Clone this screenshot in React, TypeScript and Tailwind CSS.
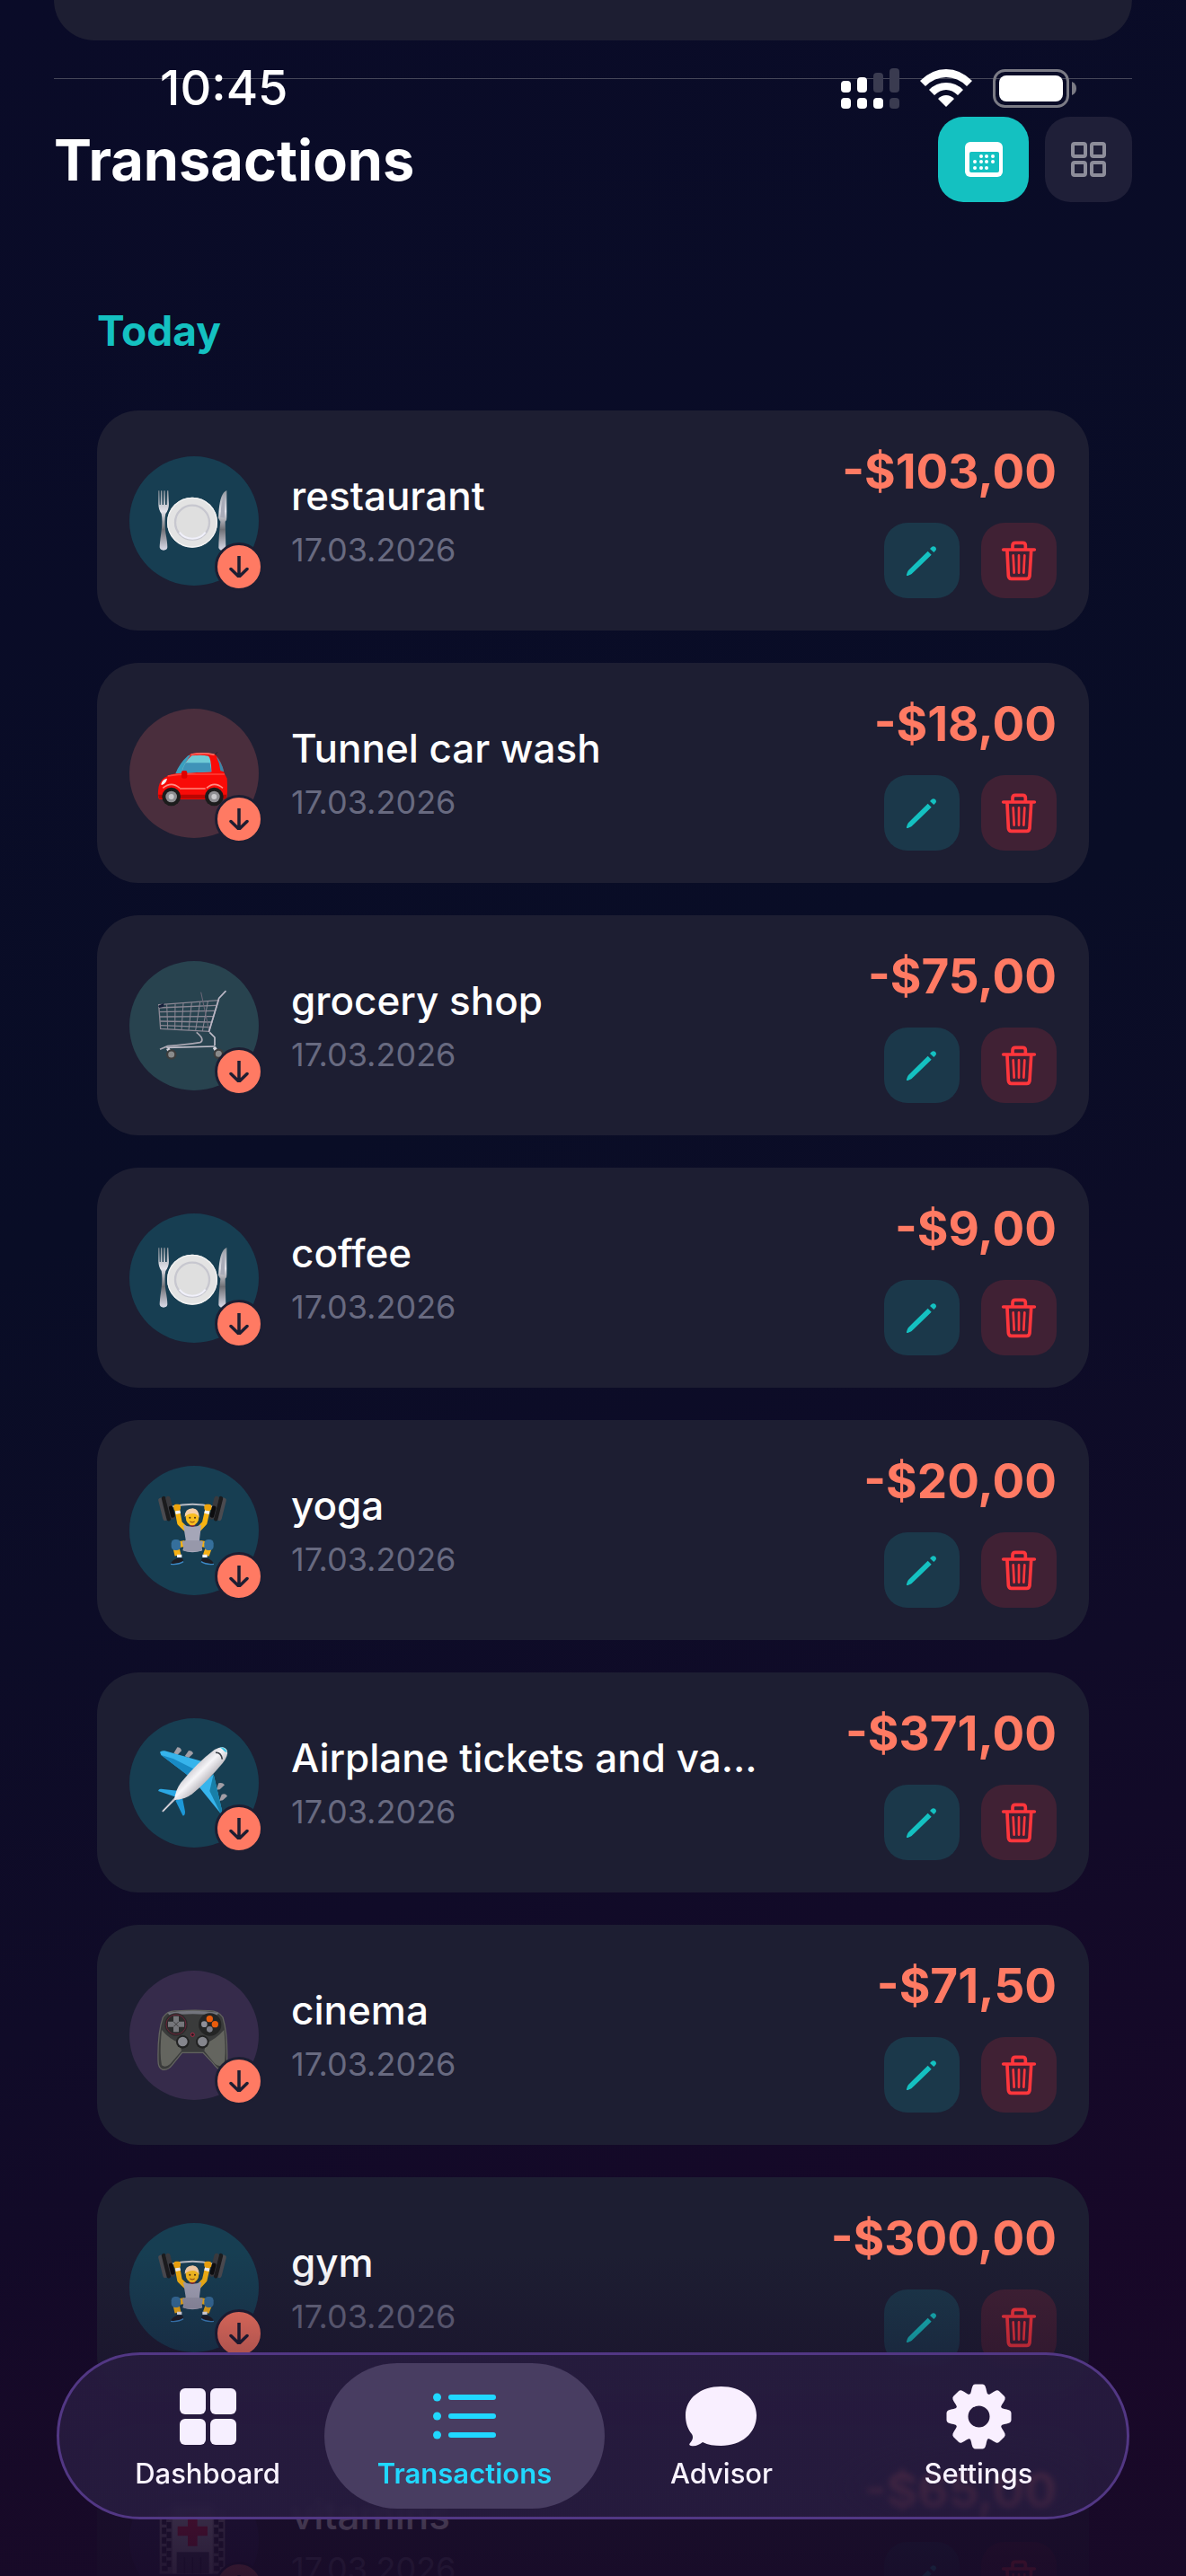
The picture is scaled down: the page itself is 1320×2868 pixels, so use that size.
import React from "react";

type Category = "food" | "car" | "shopping" | "sport" | "travel" | "fun" | "health";

type Transaction = {
  title: string;
  date: string;
  amount: string;
  category: Category;
};

const transactions: Transaction[] = [
  { title: "restaurant", date: "17.03.2026", amount: "-$103,00", category: "food" },
  { title: "Tunnel car wash", date: "17.03.2026", amount: "-$18,00", category: "car" },
  { title: "grocery shop", date: "17.03.2026", amount: "-$75,00", category: "shopping" },
  { title: "coffee", date: "17.03.2026", amount: "-$9,00", category: "food" },
  { title: "yoga", date: "17.03.2026", amount: "-$20,00", category: "sport" },
  { title: "Airplane tickets and va...", date: "17.03.2026", amount: "-$371,00", category: "travel" },
  { title: "cinema", date: "17.03.2026", amount: "-$71,50", category: "fun" },
  { title: "gym", date: "17.03.2026", amount: "-$300,00", category: "sport" },
  { title: "vitamins", date: "17.03.2026", amount: "-$65,00", category: "health" },
];

const circleColor: Record<Category, string> = {
  food: "bg-[#173e52]",
  car: "bg-[#4a2e3d]",
  shopping: "bg-[#28434f]",
  sport: "bg-[#173e52]",
  travel: "bg-[#173e52]",
  fun: "bg-[#362b4b]",
  health: "bg-[#28264f]",
};

function Plate() {
  return (
    <svg viewBox="171 183 234 234" className="size-[78px] overflow-visible" aria-hidden="true">
      <defs>
        <linearGradient id="steel" x1="0" y1="0" x2="0" y2="1">
          <stop offset="0" stopColor="#8f959d" />
          <stop offset="0.35" stopColor="#e4e4ec" />
          <stop offset="0.65" stopColor="#6f7076" />
          <stop offset="1" stopColor="#dcdcea" />
        </linearGradient>
      </defs>
      <path d="M169 199 V244 Q169 262 179 276 Q184 300 178 340 Q173 376 173 388 Q175 398 186 398 Q198 398 199 388 Q199 372 193 340 Q188 300 193 276 Q204 262 204 244 L202 199 L198 199 L197 246 H192 L191 199 H187 L186 246 H182 L181 199 H177 L176 246 H173 L172 199 Z" fill="url(#steel)" />
      <path d="M397 198 Q376 206 371 262 L369 290 Q374 300 376 302 Q370 352 370 390 Q374 399 384 399 Q394 398 394 388 L392 302 Q398 298 397 288 Z" fill="url(#steel)" />
      <path d="M390 210 Q378 230 376 288 L390 290 Z" fill="#a8abb8" />
      <circle cx="282" cy="305" r="84" fill="#e3e3e3" />
      <circle cx="282" cy="305" r="82" fill="none" stroke="#f1f1f1" strokeWidth="4" />
      <circle cx="282" cy="305" r="57" fill="#dfdfdf" stroke="#c7c7cf" strokeWidth="7" />
      <path d="M239 338 A55 55 0 0 0 326 338" fill="none" stroke="#f0f0fa" strokeWidth="6" />
    </svg>
  );
}

function Car() {
  return (
    <svg viewBox="171 186 234 234" className="size-[78px] overflow-visible" aria-hidden="true">
      <path d="M357 242 L366 232" stroke="#222" strokeWidth="3" />
      <path d="M236 302 Q252 258 276 238 Q320 231 358 240 Q378 258 389 302 L398 320 Q401 370 396 388 L326 390 H172 Q166 384 168 362 Q170 330 188 318 Q208 306 236 302 Z" fill="#f90b08" />
      <path d="M226 304 Q240 268 268 244 L278 241 Q258 264 246 302 Z" fill="#3aa0c0" />
      <path d="M246 302 Q252 268 280 244 Q312 240 336 245 Q345 252 346 298 Z" fill="#6fcbd6" />
      <path d="M248 296 Q252 282 260 268 H341 L346 298 L247 302 Z" fill="#3f93b8" />
      <path d="M362 246 Q380 264 388 298 L376 294 Q374 270 362 246 Z" fill="#3b87a8" />
      <path d="M278 240 Q320 233 356 241" stroke="#ff6a60" strokeWidth="5" fill="none" />
      <path d="M200 312 Q240 304 300 306 L390 306" stroke="#ff4338" strokeWidth="5" fill="none" />
      <rect x="246" y="294" width="19" height="26" rx="6" fill="#df0000" />
      <path d="M178 340 Q182 322 198 320 Q196 336 180 342 Z" fill="#f3f3f3" />
      <path d="M240 354 H326" stroke="#ff9a8c" strokeWidth="4" />
      <path d="M168 374 H396 V388 H172 Z" fill="#ba0602" />
      <path d="M184 352 Q212 328 240 352 M330 352 Q356 328 384 352" stroke="#ff8d84" strokeWidth="5" fill="none" />
      <circle cx="212" cy="381" r="31" fill="#1c1c1c" />
      <circle cx="212" cy="381" r="19" fill="#8e8e92" />
      <circle cx="212" cy="381" r="9" fill="#c9c9cc" />
      <circle cx="355" cy="381" r="31" fill="#1c1c1c" />
      <circle cx="355" cy="381" r="19" fill="#8e8e92" />
      <circle cx="355" cy="381" r="9" fill="#c9c9cc" />
    </svg>
  );
}

function Cart() {
  return (
    <svg viewBox="171 189 234 234" className="size-[78px] overflow-visible" fill="none" aria-hidden="true">
      <g stroke="#8b8794" strokeWidth="4">
        <path d="M170 236 L370 221 L338 325 L176 316 Z" />
        <path d="M171 246 L362 238 M172 260 L358 256 M174 276 L354 275 M175 291 L349 294 M176 305 L343 311" />
        <path d="M197 235 L200 317 M225 233 L224 318 M252 231 L246 320 M280 229 L270 321 M308 227 L293 322 M334 225 L316 324" strokeWidth="3" />
        <path d="M311 194 L338 322" strokeWidth="3" stroke="#6d6878" />
      </g>
      <path d="M338 325 L371 214 L393 191" stroke="#bcb8c6" strokeWidth="5" strokeLinecap="round" />
      <path d="M168 240 L187 230 V242 L172 246 Z" fill="#16203a" />
      <path d="M296 328 Q326 352 308 362 Q260 370 200 374 L174 385" stroke="#aaa7b2" strokeWidth="5" />
      <path d="M340 328 L357 345 V372 M196 379 L358 375" stroke="#c2bfca" strokeWidth="5" />
      <path d="M200 382 L212 402 M355 378 L368 398" stroke="#d9d7df" strokeWidth="11" />
      <circle cx="212" cy="402" r="14" fill="#8b8b8b" stroke="#3d3d3d" strokeWidth="7" />
      <circle cx="370" cy="400" r="14" fill="#8b8b8b" stroke="#3d3d3d" strokeWidth="7" />
    </svg>
  );
}

function Lifter() {
  return (
    <svg viewBox="171 192 234 234" className="size-[78px] overflow-visible" aria-hidden="true">
      <path d="M212 230 Q284 212 352 230" stroke="#b9bcc4" strokeWidth="6" fill="none" />
      <g transform="rotate(-14 197 236)">
        <rect x="176" y="196" width="18" height="78" rx="8" fill="#4b4b50" />
        <rect x="188" y="193" width="14" height="85" rx="7" fill="#1b1b1d" />
        <rect x="201" y="196" width="16" height="80" rx="8" fill="#3a3a3e" />
        <rect x="204" y="230" width="14" height="40" rx="6" fill="#0d0d0f" />
      </g>
      <g transform="rotate(14 367 236)">
        <rect x="370" y="196" width="18" height="78" rx="8" fill="#4b4b50" />
        <rect x="362" y="193" width="14" height="85" rx="7" fill="#1b1b1d" />
        <rect x="347" y="196" width="16" height="80" rx="8" fill="#3a3a3e" />
        <rect x="347" y="230" width="14" height="40" rx="6" fill="#0d0d0f" />
      </g>
      <path d="M231 236 L240 284 L262 306 M334 236 L323 284 L302 306" stroke="#f7b412" strokeWidth="17" fill="none" strokeLinejoin="round" strokeLinecap="round" />
      <path d="M226 250 L242 246 M323 246 L339 250" stroke="#f3f3f7" strokeWidth="11" />
      <rect x="220" y="221" width="23" height="21" rx="8" fill="#eea40c" />
      <rect x="322" y="221" width="24" height="21" rx="8" fill="#eea40c" />
      <path d="M252 290 Q282 302 312 290 L306 340 L316 376 Q282 388 250 376 L260 340 Z" fill="#a5a6b8" />
      <path d="M270 288 Q282 306 295 288 Z" fill="#8c2436" />
      <ellipse cx="282" cy="264" rx="22" ry="28" fill="#f9bd1f" />
      <path d="M257 264 Q256 236 284 235 Q306 238 305 266 Q298 252 284 252 Q266 252 257 264 Z" fill="#f5cfaa" />
      <circle cx="274" cy="266" r="3" fill="#4a2e12" />
      <circle cx="291" cy="266" r="3" fill="#4a2e12" />
      <path d="M274 279 Q282 285 290 279" stroke="#8c4310" strokeWidth="3" fill="none" />
      <path d="M258 352 L226 358 L234 392 M308 352 L340 358 L328 392" stroke="#f5b015" strokeWidth="21" fill="none" strokeLinejoin="round" />
      <path d="M262 342 L248 346 L256 378 H312 L318 346 L302 342 Z" fill="#9798aa" />
      <rect x="212" y="339" width="31" height="36" rx="13" fill="#356f9c" />
      <rect x="322" y="339" width="31" height="36" rx="13" fill="#356f9c" />
      <path d="M231 394 H247 M316 394 H332" stroke="#f2f2f7" strokeWidth="10" />
      <path d="M210 420 Q212 410 232 401 L250 402 L252 412 Q240 421 210 420 Z M354 420 Q352 410 332 401 L314 402 L312 412 Q324 421 354 420 Z" fill="#1c1d24" />
      <path d="M210 421 Q236 424 252 413 M354 421 Q328 424 312 413" stroke="#3d8ac8" strokeWidth="4" fill="none" />
    </svg>
  );
}

function Plane() {
  return (
    <svg viewBox="171 168 234 234" className="size-[78px] overflow-visible" aria-hidden="true">
      <defs>
        <linearGradient id="hull" x1="0" y1="0" x2="1" y2="1">
          <stop offset="0.25" stopColor="#a9a5ad" />
          <stop offset="0.48" stopColor="#f6f5f8" />
          <stop offset="0.75" stopColor="#8e8a92" />
        </linearGradient>
      </defs>
      <g fill="#a29ea6">
        <path d="M220 186 L232 166 Q244 166 246 178 L232 192 Z" />
        <path d="M257 196 L270 177 Q282 177 285 187 L270 201 Z" />
        <path d="M362 308 L370 286 Q383 282 390 292 L374 307 Z" />
        <path d="M372 345 L380 324 Q392 318 399 329 L384 343 Z" />
      </g>
      <path d="M174 182 Q178 176 190 178 L312 212 L270 262 L178 192 Z" fill="#36b4ec" />
      <path d="M178 192 L218 204 L290 240 L270 262 Z" fill="#188ac4" />
      <path d="M353 256 L380 372 Q382 386 376 386 L304 298 Z" fill="#36b4ec" />
      <path d="M353 256 L380 372 Q382 386 376 386 L340 312 Z" fill="#187fa8" />
      <path d="M168 312 Q170 304 178 305 L240 312 L232 334 Z" fill="#2ba7e4" />
      <path d="M226 344 L248 330 L258 380 Q258 396 250 394 Z" fill="#1d98d8" />
      <path d="M184 379 L238 322" stroke="#c0bcc6" strokeWidth="6" strokeLinecap="round" />
      <path d="M222 342 Q226 308 244 284 Q300 216 356 174 Q388 156 398 176 Q404 192 384 218 Q336 276 282 322 Q256 342 222 342 Z" fill="url(#hull)" />
      <path d="M373 166 Q394 164 398 184 Q388 180 380 170 Z" fill="#3fc4e4" />
      <path d="M360 184 Q378 182 382 206" fill="none" stroke="#3b4048" strokeWidth="5" />
      <path d="M186 378 L246 320" stroke="#e8e6ec" strokeWidth="3" />
    </svg>
  );
}

function Gamepad() {
  return (
    <svg viewBox="171 171 234 234" className="size-[78px] overflow-visible" aria-hidden="true">
      <path d="M184 228 Q200 204 232 207 Q283 203 334 206 Q368 204 384 228 Q400 280 398 372 Q396 404 376 402 Q366 402 350 380 L318 346 H248 L214 388 Q200 406 182 402 Q168 398 168 372 Q166 280 184 228 Z" fill="#3a3b3b" stroke="#62635f" strokeWidth="4" />
      <path d="M180 270 Q204 300 240 314 L246 340 L208 384 Q192 398 180 388 Q172 350 180 270 Z M388 270 Q362 300 328 314 L322 340 L358 384 Q374 396 388 384 Q396 350 388 270 Z" fill="#64655f" />
      <path d="M200 212 Q283 200 370 212 L364 222 Q283 212 206 222 Z" fill="#73757d" />
      <circle cx="228" cy="252" r="38" fill="#2a2b2b" />
      <circle cx="228" cy="252" r="33" fill="none" stroke="#6c2338" strokeWidth="3" />
      <path d="M219 224 H237 V242 H255 V260 H237 V277 H219 V260 H201 V242 H219 Z" fill="#76777b" />
      <path d="M220 243 L236 259 M236 243 L220 259" stroke="#404040" strokeWidth="3" />
      <circle cx="341" cy="252" r="38" fill="#242525" />
      <circle cx="340" cy="233" r="11" fill="#e95c0c" />
      <circle cx="358" cy="251" r="11" fill="#e95c0c" />
      <circle cx="322" cy="251" r="10" fill="#8f909a" />
      <circle cx="340" cy="268" r="10" fill="#7d7e88" />
      <circle cx="283" cy="286" r="6" fill="#2b1a20" stroke="#b02a48" strokeWidth="3" />
      <circle cx="250" cy="310" r="22" fill="#222323" />
      <circle cx="250" cy="309" r="16" fill="#85868d" />
      <circle cx="316" cy="310" r="22" fill="#222323" />
      <circle cx="316" cy="309" r="16" fill="#85868d" />
    </svg>
  );
}

function Hospital() {
  return (
    <svg viewBox="171 183 234 234" className="size-[78px] overflow-visible" aria-hidden="true">
      <rect x="173" y="205" width="218" height="208" fill="#8c8793" />
      <rect x="216" y="186" width="134" height="226" fill="#b9b4bf" />
      <path d="M267 220 H299 V254 H333 V286 H299 V320 H267 V286 H233 V254 H267 Z" fill="#e0213f" />
      <path d="M188 224 H204 V396 H188 Z M362 224 H378 V396 H362 Z" fill="none" stroke="#262338" strokeWidth="15" strokeDasharray="22 10" />
      <rect x="230" y="340" width="108" height="72" fill="#464860" />
      <path d="M256 358 V412 M283 358 V412 M310 358 V412" stroke="#252840" strokeWidth="5" />
    </svg>
  );
}

const emoji: Record<Category, () => React.JSX.Element> = {
  food: Plate,
  car: Car,
  shopping: Cart,
  sport: Lifter,
  travel: Plane,
  fun: Gamepad,
  health: Hospital,
};

function ArrowDown() {
  return (
    <svg viewBox="389 408 96 96" className="size-6" fill="none" stroke="#1d1e32" strokeWidth="14" strokeLinecap="round" strokeLinejoin="round" aria-hidden="true">
      <path d="M437 409 V501 M401 466 L437 501 L473 466" />
    </svg>
  );
}

function Pencil() {
  return (
    <svg viewBox="426 480 144 144" className="size-12" fill="#14c1c1" aria-hidden="true">
      <path d="M518 521 L530 533 L464 597 Q462 599 451 603 Q446 604 447 599 Q450 589 453 585 Z" />
      <path d="M530 508 Q536 502 543 507 Q549 514 543 520 L538 525 L525 513 Z" />
    </svg>
  );
}

function Trash() {
  return (
    <svg viewBox="750 480 144 144" className="size-12" fill="none" stroke="#ff363c" strokeLinecap="round" strokeLinejoin="round" aria-hidden="true">
      <path d="M770 516 H874" strokeWidth="11" />
      <path d="M801 514 V502 Q801 493 810 493 H835 Q844 493 844 502 V514" strokeWidth="11" />
      <path d="M783 520 L787 603 Q788 613 797 613 H848 Q857 613 858 603 L863 520" strokeWidth="11" />
      <path d="M803 535 L806 593 M822 535 V593 M841 535 L838 593" strokeWidth="8" />
    </svg>
  );
}

function TransactionCard({ title, date, amount, category }: Transaction) {
  const Emoji = emoji[category];
  return (
    <li className="flex h-[245px] shrink-0 items-center gap-9 rounded-[46px] bg-[#1d1e32] px-9">
      <div className={`relative flex size-36 shrink-0 items-center justify-center rounded-full ${circleColor[category]}`}>
        <Emoji />
        <span className="absolute -right-[5px] -bottom-[6px] flex size-[54px] items-center justify-center rounded-full border-[3px] border-[#1d1e32] bg-[#ff7a63]">
          <ArrowDown />
        </span>
      </div>
      <div className="min-w-0 flex-1 pt-1">
        <h3 className="text-[44px] leading-[60px] font-medium whitespace-nowrap text-white">{title}</h3>
        <p className="text-[36px] leading-[60px] whitespace-nowrap text-[#686a80]">{date}</p>
      </div>
      <div className="flex shrink-0 flex-col items-end gap-6">
        <p className="text-[53px] leading-[65px] font-bold text-[#ff7a63]">{amount}</p>
        <div className="flex gap-6">
          <button type="button" aria-label={`Edit ${title}`} className="flex size-[84px] items-center justify-center rounded-[26px] bg-[#1b384a]">
            <Pencil />
          </button>
          <button type="button" aria-label={`Delete ${title}`} className="flex size-[84px] items-center justify-center rounded-[26px] bg-[#402134]">
            <Trash />
          </button>
        </div>
      </div>
    </li>
  );
}

function StatusBar() {
  return (
    <div className="absolute inset-x-0 top-0 z-10 flex h-[196px] items-center justify-between pr-[121px] pl-[178px]">
      <span className="text-[54px] leading-[64px] font-medium text-white">10:45</span>
      <div className="flex items-center gap-[23px]">
        <svg viewBox="937 74 65 45" className="h-[45px] w-[65px]" fill="#fff" aria-hidden="true">
          <rect x="937" y="88" width="11" height="13" rx="4" />
          <rect x="955" y="84" width="11" height="17" rx="4" />
          <rect x="973" y="79" width="11" height="22" rx="4" fill="#3a3b50" />
          <rect x="991" y="74" width="11" height="27" rx="4" fill="#3a3b50" />
          <rect x="937" y="107" width="11" height="12" rx="4" />
          <rect x="955" y="107" width="11" height="12" rx="4" />
          <rect x="973" y="107" width="11" height="12" rx="4" />
          <rect x="991" y="107" width="11" height="12" rx="4" fill="#3a3b50" />
        </svg>
        <svg viewBox="1025 75 58 42" className="h-[42px] w-[58px]" fill="#fff" aria-hidden="true">
          <path d="M1025 88 Q1038 75 1054 75 Q1070 75 1083 88 L1077 94 Q1067 84 1054 84 Q1041 84 1031 94 Z" />
          <path d="M1035 98 Q1043 90 1054 90 Q1065 90 1073 98 L1067 104 Q1061 98 1054 98 Q1047 98 1041 104 Z" />
          <path d="M1045 108 Q1049 104 1054 104 Q1059 104 1063 108 L1054 117 Z" />
        </svg>
        <svg viewBox="1105 75 94 43" className="h-[43px] w-[94px]" aria-hidden="true">
          <rect x="1106.5" y="76.5" width="82" height="40" rx="12" fill="none" stroke="#7b7b85" strokeWidth="3" />
          <rect x="1112" y="82" width="71" height="29" rx="8" fill="#fff" />
          <path d="M1193 89 Q1198 91 1198 96.500 Q1198 102 1193 104 Z" fill="#7b7b85" />
        </svg>
      </div>
    </div>
  );
}

function CalendarIcon() {
  return (
    <svg viewBox="0 0 42 39" className="h-[39px] w-[42px]" aria-hidden="true">
      <rect width="42" height="39" rx="6" fill="#fff" />
      <rect x="5" y="11" width="33" height="23" rx="2" fill="#14c1c1" />
      <g fill="#fff">
        <circle cx="18" cy="16" r="2" />
        <circle cx="24" cy="16" r="2" />
        <circle cx="31" cy="16" r="2" />
        <circle cx="11" cy="22" r="2" />
        <circle cx="18" cy="22" r="2" />
        <circle cx="24" cy="22" r="2" />
        <circle cx="31" cy="22" r="2" />
        <circle cx="11" cy="29" r="2" />
        <circle cx="18" cy="29" r="2" />
        <circle cx="24" cy="29" r="2" />
      </g>
    </svg>
  );
}

function GridOutlineIcon() {
  return (
    <svg viewBox="0 0 39 39" className="size-[39px]" fill="none" stroke="#8d8d9a" strokeWidth="4" aria-hidden="true">
      <rect x="2" y="2" width="14" height="14" rx="2" />
      <rect x="23" y="2" width="14" height="14" rx="2" />
      <rect x="2" y="23" width="14" height="14" rx="2" />
      <rect x="23" y="23" width="14" height="14" rx="2" />
    </svg>
  );
}

function DashboardIcon() {
  return (
    <svg viewBox="0 0 63 63" className="size-[63px]" fill="#f6efff" aria-hidden="true">
      <rect width="29" height="29" rx="6" />
      <rect x="34" width="29" height="29" rx="6" />
      <rect y="34" width="29" height="29" rx="6" />
      <rect x="34" y="34" width="29" height="29" rx="6" />
    </svg>
  );
}

function ListIcon() {
  return (
    <svg viewBox="0 0 70 52" className="h-[52px] w-[70px]" fill="#20d8ff" aria-hidden="true">
      {[5, 26, 47].map((y) => (
        <g key={y}>
          <circle cx="4.500" cy={y} r="4.500" />
          <rect x="17" y={y - 3} width="53" height="6" rx="3" />
        </g>
      ))}
    </svg>
  );
}

function BubbleIcon() {
  return (
    <svg viewBox="0 0 80 67" className="h-[67px] w-20" fill="#f9efff" aria-hidden="true">
      <path d="M39.500 0 C62 0 79 13 79 32 C79 52 62 66 39.500 66 C32 66 25 65 19 62 C15 65 11 67 6 66 Q3 65 5 63 C8 60 9 56 7 53 C2 47 0 40 0 32 C0 13 17 0 39.500 0 Z" />
    </svg>
  );
}

function GearIcon() {
  return (
    <svg viewBox="-36.500 -36.500 73 73" className="size-[73px]" fill="#f9efff" aria-hidden="true">
      <circle r="19.500" fill="none" stroke="#f9efff" strokeWidth="15" />
      {[0, 45, 90, 135, 180, 225, 270, 315].map((angle) => (
        <path key={angle} transform={`rotate(${angle})`} d="M-11 -23 Q-9 -25 -8 -31 L-7 -34 Q-6 -36 -4 -36 H4 Q6 -36 7 -34 L8 -31 Q9 -25 11 -23 Z" />
      ))}
    </svg>
  );
}

const tabs = [
  { label: "Dashboard", icon: DashboardIcon, active: false },
  { label: "Transactions", icon: ListIcon, active: true },
  { label: "Advisor", icon: BubbleIcon, active: false },
  { label: "Settings", icon: GearIcon, active: false },
];

function TabBar() {
  return (
    <nav className="absolute inset-x-[63px] bottom-[63px] z-20 flex h-[186px] rounded-full border-[3px] border-[#523784] bg-[radial-gradient(ellipse_170px_60px_at_86%_82%,#2d214899_60%,#271c3fe6_100%)] px-[22px] py-[9px] backdrop-blur-[3px]">
      {tabs.map(({ label, icon: Icon, active }) => (
        <button
          key={label}
          type="button"
          aria-current={active ? "page" : undefined}
          className={`relative flex flex-1 flex-col items-center pt-5 ${active ? "text-[#20d8ff]" : "text-[#f9f3ff]"}`}
        >
          {active && <span className="absolute inset-y-0 -inset-x-[13px] rounded-full bg-[#483d61]" />}
          <span className="relative flex h-[78px] items-center justify-center">
            <Icon />
          </span>
          <span className={`relative mt-1 text-[31px] leading-[42px] ${active ? "font-semibold" : "font-medium"}`}>{label}</span>
        </button>
      ))}
    </nav>
  );
}

export default function App() {
  return (
    <div className="relative h-screen overflow-hidden bg-[linear-gradient(160deg,#0a0b28_0%,#090d26_42%,#100b28_68%,#1b0628_100%)] font-['Inter',sans-serif]">
      <StatusBar />
      <main className="flex flex-col px-[60px]">
        <div className="h-[45px] rounded-b-[52px] bg-[#1d1e32]" />
        <hr className="mt-[42px] border-t border-[#454658]" />
        <header className="mt-[42px] flex h-[95px] items-center justify-between">
          <h1 className="text-[63px] leading-[80px] font-bold text-white">Transactions</h1>
          <div className="flex h-full gap-[18px]">
            <button type="button" aria-label="Calendar view" aria-pressed="true" className="flex w-[101px] items-center justify-center rounded-[28px] bg-[#14c1c1]">
              <CalendarIcon />
            </button>
            <button type="button" aria-label="Grid view" aria-pressed="false" className="flex w-[97px] items-center justify-center rounded-[28px] bg-[#1f1f38]">
              <GridOutlineIcon />
            </button>
          </div>
        </header>
        <section className="mt-[114px] px-12">
          <h2 className="text-[46px] leading-[58px] font-bold text-[#14c1c1]">Today</h2>
          <ul className="mt-[60px] flex flex-col gap-9">
            {transactions.map((item) => (
              <TransactionCard key={item.title} {...item} />
            ))}
          </ul>
        </section>
      </main>
      <div className="pointer-events-none absolute inset-x-0 bottom-0 z-10 h-[360px] bg-[linear-gradient(to_bottom,transparent_0%,#180a2826_15%,#180a2855_30%,#180a28cc_80%,#180a28e6_100%)]" />
      <TabBar />
    </div>
  );
}
